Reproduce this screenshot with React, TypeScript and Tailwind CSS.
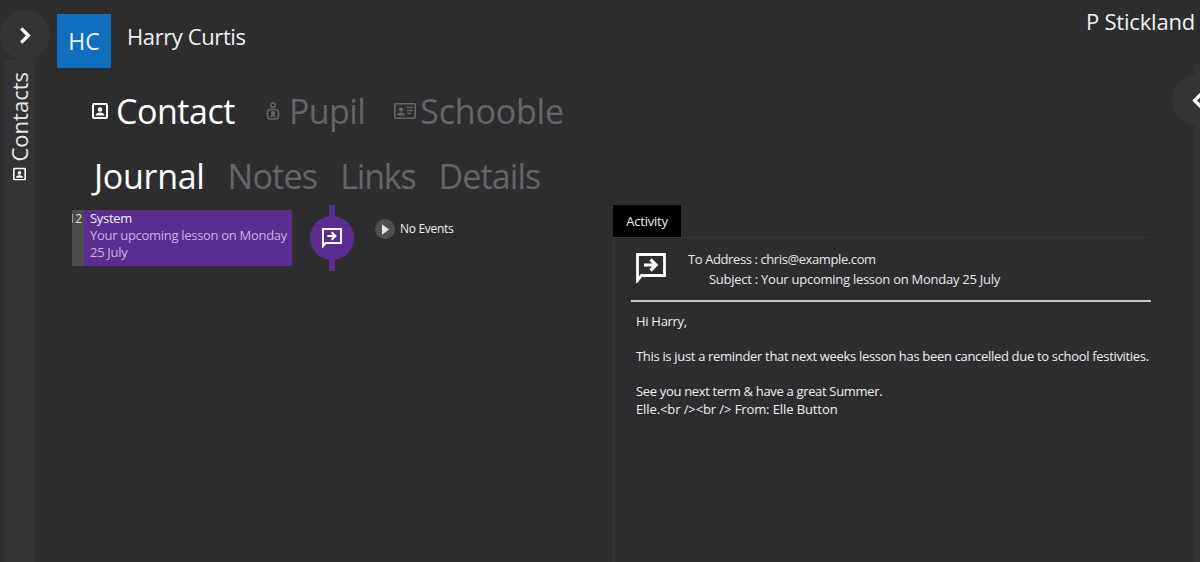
const font = { fontFamily: '"Open Sans", "Noto Sans", sans-serif' };

function ContactIcon({ className }: { className?: string }) {
  return (
    <svg viewBox="0 0 16 16" className={className} fill="none">
      <rect x="1" y="1" width="14" height="14" rx="1" stroke="currentColor" strokeWidth="2" />
      <circle cx="8" cy="6.500" r="2.300" fill="currentColor" />
      <path d="M3.500 12.500c.3-2 2-3 4.500-3s4.200 1 4.500 3z" fill="currentColor" />
    </svg>
  );
}

function PupilIcon({ className }: { className?: string }) {
  return (
    <svg viewBox="0 0 14 18" className={className} fill="none" stroke="currentColor" strokeWidth="1.500">
      <circle cx="7" cy="3.200" r="2.200" />
      <rect x="1.500" y="7.500" width="11" height="9.500" rx="3" />
      <circle cx="7" cy="11" r="1.300" fill="currentColor" />
      <path d="M4.500 15c.4-1 1.300-1.500 2.500-1.500s2.100.5 2.500 1.500" />
    </svg>
  );
}

function CardIcon({ className }: { className?: string }) {
  return (
    <svg viewBox="0 0 22 16" className={className} fill="none">
      <rect x="0.800" y="0.800" width="20.400" height="14.400" rx="1" stroke="currentColor" strokeWidth="1.600" />
      <circle cx="7" cy="6.500" r="2.100" fill="currentColor" />
      <path d="M3 12.500c.3-2 1.800-3 4-3s3.700 1 4 3z" fill="currentColor" />
      <path d="M13 4.500h6M13 7.500h6M13 10.500h4" stroke="currentColor" strokeWidth="1.300" />
    </svg>
  );
}

function MessageIcon({ className }: { className?: string }) {
  return (
    <svg viewBox="0 0 30 30" className={className} fill="none">
      <path d="M1.500 1.500h27v21h-23l-4 5z" stroke="currentColor" strokeWidth="2.800" strokeLinejoin="miter" />
      <path d="M8 12h12M14.500 6.500l5.500 5.500-5.500 5.500" stroke="currentColor" strokeWidth="3.200" />
    </svg>
  );
}

function Chevron({ left }: { left?: boolean }) {
  return (
    <svg viewBox="0 0 12 18" className="h-[17px] w-[12px] text-white" fill="none" stroke="currentColor" strokeWidth="3.600">
      <path d={left ? "M10 1.500L2.500 9l7.500 7.500" : "M2 1.500L9.500 9 2 16.500"} />
    </svg>
  );
}

export default function App() {
  return (
    <div style={font} className="relative flex h-[562px] w-[1200px] overflow-hidden bg-[#2d2d30] text-white">
      <aside className="ml-1 mt-[60px] flex h-[502px] w-[31px] shrink-0 flex-col items-center justify-start bg-[#333335]">
        <div className="mt-[12px] flex w-[31px] rotate-180 items-center gap-[6px] [writing-mode:vertical-rl] text-[22px] leading-[31px] text-[#e8e8e8]">
          <ContactIcon className="h-[13px] w-[13px] rotate-180 text-white" />
          <span>Contacts</span>
        </div>
      </aside>
      <div className="absolute left-[0px] top-[10px] flex h-[50px] w-[50px] items-center justify-center rounded-full bg-[#343436]">
        <Chevron />
      </div>

      <main className="flex min-w-0 flex-1 flex-col">
        <header className="ml-[22px] mt-[14px] flex h-[54px] shrink-0 items-start">
          <div className="flex h-[54px] w-[54px] items-center justify-center bg-[#106EBE] text-[23px] text-[#eef4fa]">HC</div>
          <div className="ml-[16px] mt-[6px] text-[22px] leading-[32px] tracking-[-0.4px] text-[#f0f0f0]">Harry Curtis</div>
          <div className="ml-auto -mr-[1px] -mt-[9px] text-[22px] leading-[32px] tracking-[-0.2px] text-[#f0f0f0]">P Stickland</div>
        </header>

        <nav className="ml-[57px] mt-[21px] flex h-[44px] shrink-0 items-center text-[34px] leading-[44px] tracking-[-0.6px] text-[#666668]">
          <div className="flex items-center text-white">
            <ContactIcon className="mr-[8px] h-[16px] w-[16px]" />
            <span className="tracking-[-0.45px]">Contact</span>
          </div>
          <div className="ml-[31px] flex items-center">
            <PupilIcon className="mr-[9px] h-[18px] w-[14px]" />
            <span>Pupil</span>
          </div>
          <div className="ml-[29px] flex items-center">
            <CardIcon className="mr-[4px] h-[16px] w-[22px]" />
            <span className="tracking-[-0.2px]">Schooble</span>
          </div>
        </nav>

        <nav className="ml-[59px] mt-[21px] flex h-[44px] shrink-0 items-center gap-[23px] text-[34px] leading-[44px] text-[#666668]">
          <span className="tracking-[-0.3px] text-white">Journal</span>
          <span className="tracking-[-0.75px]">Notes</span>
          <span className="tracking-[-1.2px]">Links</span>
          <span className="tracking-[-0.9px]">Details</span>
        </nav>

        <div className="flex min-h-0 flex-1">
          <section className="flex w-[578px] shrink-0 pt-[12px]">
            <div className="ml-[37px] flex h-[56px] w-[220px] shrink-0">
              <div className="flex w-[12px] justify-end overflow-hidden bg-[#4d4d4f] pr-[2px] text-[12px] leading-[17px] text-[#dddddd]"><span className="shrink-0">12</span></div>
              <div className="flex-1 bg-[#5c2d91] pl-[6px] text-[13px] leading-[17px] tracking-[-0.3px]">
                <div className="text-[#f0f0f0]">System</div>
                <div className="text-[#c8b4e0]">Your upcoming lesson on Monday 25 July</div>
              </div>
            </div>
            <div className="relative ml-[18px] -mt-[5px] flex h-[66px] w-[44px] shrink-0 items-center justify-center">
              <div className="absolute left-[19px] top-0 h-[66px] w-[6px] bg-[#5c2d91]" />
              <div className="relative flex h-[44px] w-[44px] items-center justify-center rounded-full bg-[#5c2d91]">
                <MessageIcon className="h-[20px] w-[20px] text-white" />
              </div>
            </div>
            <div className="ml-[21px] mt-[9px] flex h-[20px] items-center gap-[5px] text-[12px] tracking-[-0.3px] text-[#eeeeee]">
              <span className="flex h-[20px] w-[20px] items-center justify-center rounded-full bg-[#505052]">
                <svg viewBox="0 0 8 12" className="ml-[1px] h-[11px] w-[7px]"><path d="M0 0l8 6-8 6z" fill="#e6e6e6" /></svg>
              </span>
              No Events
            </div>
          </section>

          <section className="flex flex-1 flex-col pt-[7px]">
            <div className="h-[32px] w-[68px] shrink-0 bg-black pt-[1px] text-center text-[13px] leading-[31px] tracking-[-0.2px] text-[#eeeeee]">Activity</div>
            <div className="w-[538px] flex-1 border-l border-t border-[#363638] pl-[17px] pt-[11px]">
              <div className="flex h-[53px] w-[520px] border-b-2 border-[#c8c8c8]">
                <MessageIcon className="ml-[5px] mt-[4px] h-[30px] w-[30px] text-white" />
                <div className="ml-[22px] text-[13px] leading-[20px] text-[#e8e8e8]">
                  <div className="tracking-[-0.4px]">To Address : chris@example.com</div>
                  <div className="pl-[21px] tracking-[-0.26px]">Subject : Your upcoming lesson on Monday 25 July</div>
                </div>
              </div>
              <div className="ml-[5px] mt-[11px] w-[530px] text-[13px] leading-[17.500px] text-[#eeeeee]">
                <p className="tracking-[-0.3px]">Hi Harry,</p>
                <p className="mt-[17.500px] tracking-[-0.32px]">This is just a reminder that next weeks lesson has been cancelled due to school festivities.</p>
                <p className="mt-[17.500px] tracking-[-0.33px]">See you next term &amp; have a great Summer.</p>
                <p className="tracking-[-0.1px]">Elle.&lt;br /&gt;&lt;br /&gt; From: Elle Button</p>
              </div>
            </div>
          </section>
        </div>
      </main>

      <aside className="mt-[63px] w-[6px] shrink-0 bg-[#333335]" />

      <div className="absolute left-[1172px] top-[75px] flex h-[50px] w-[50px] items-center rounded-full bg-[#343436] pl-[20px]">
        <Chevron left />
      </div>
    </div>
  );
}
